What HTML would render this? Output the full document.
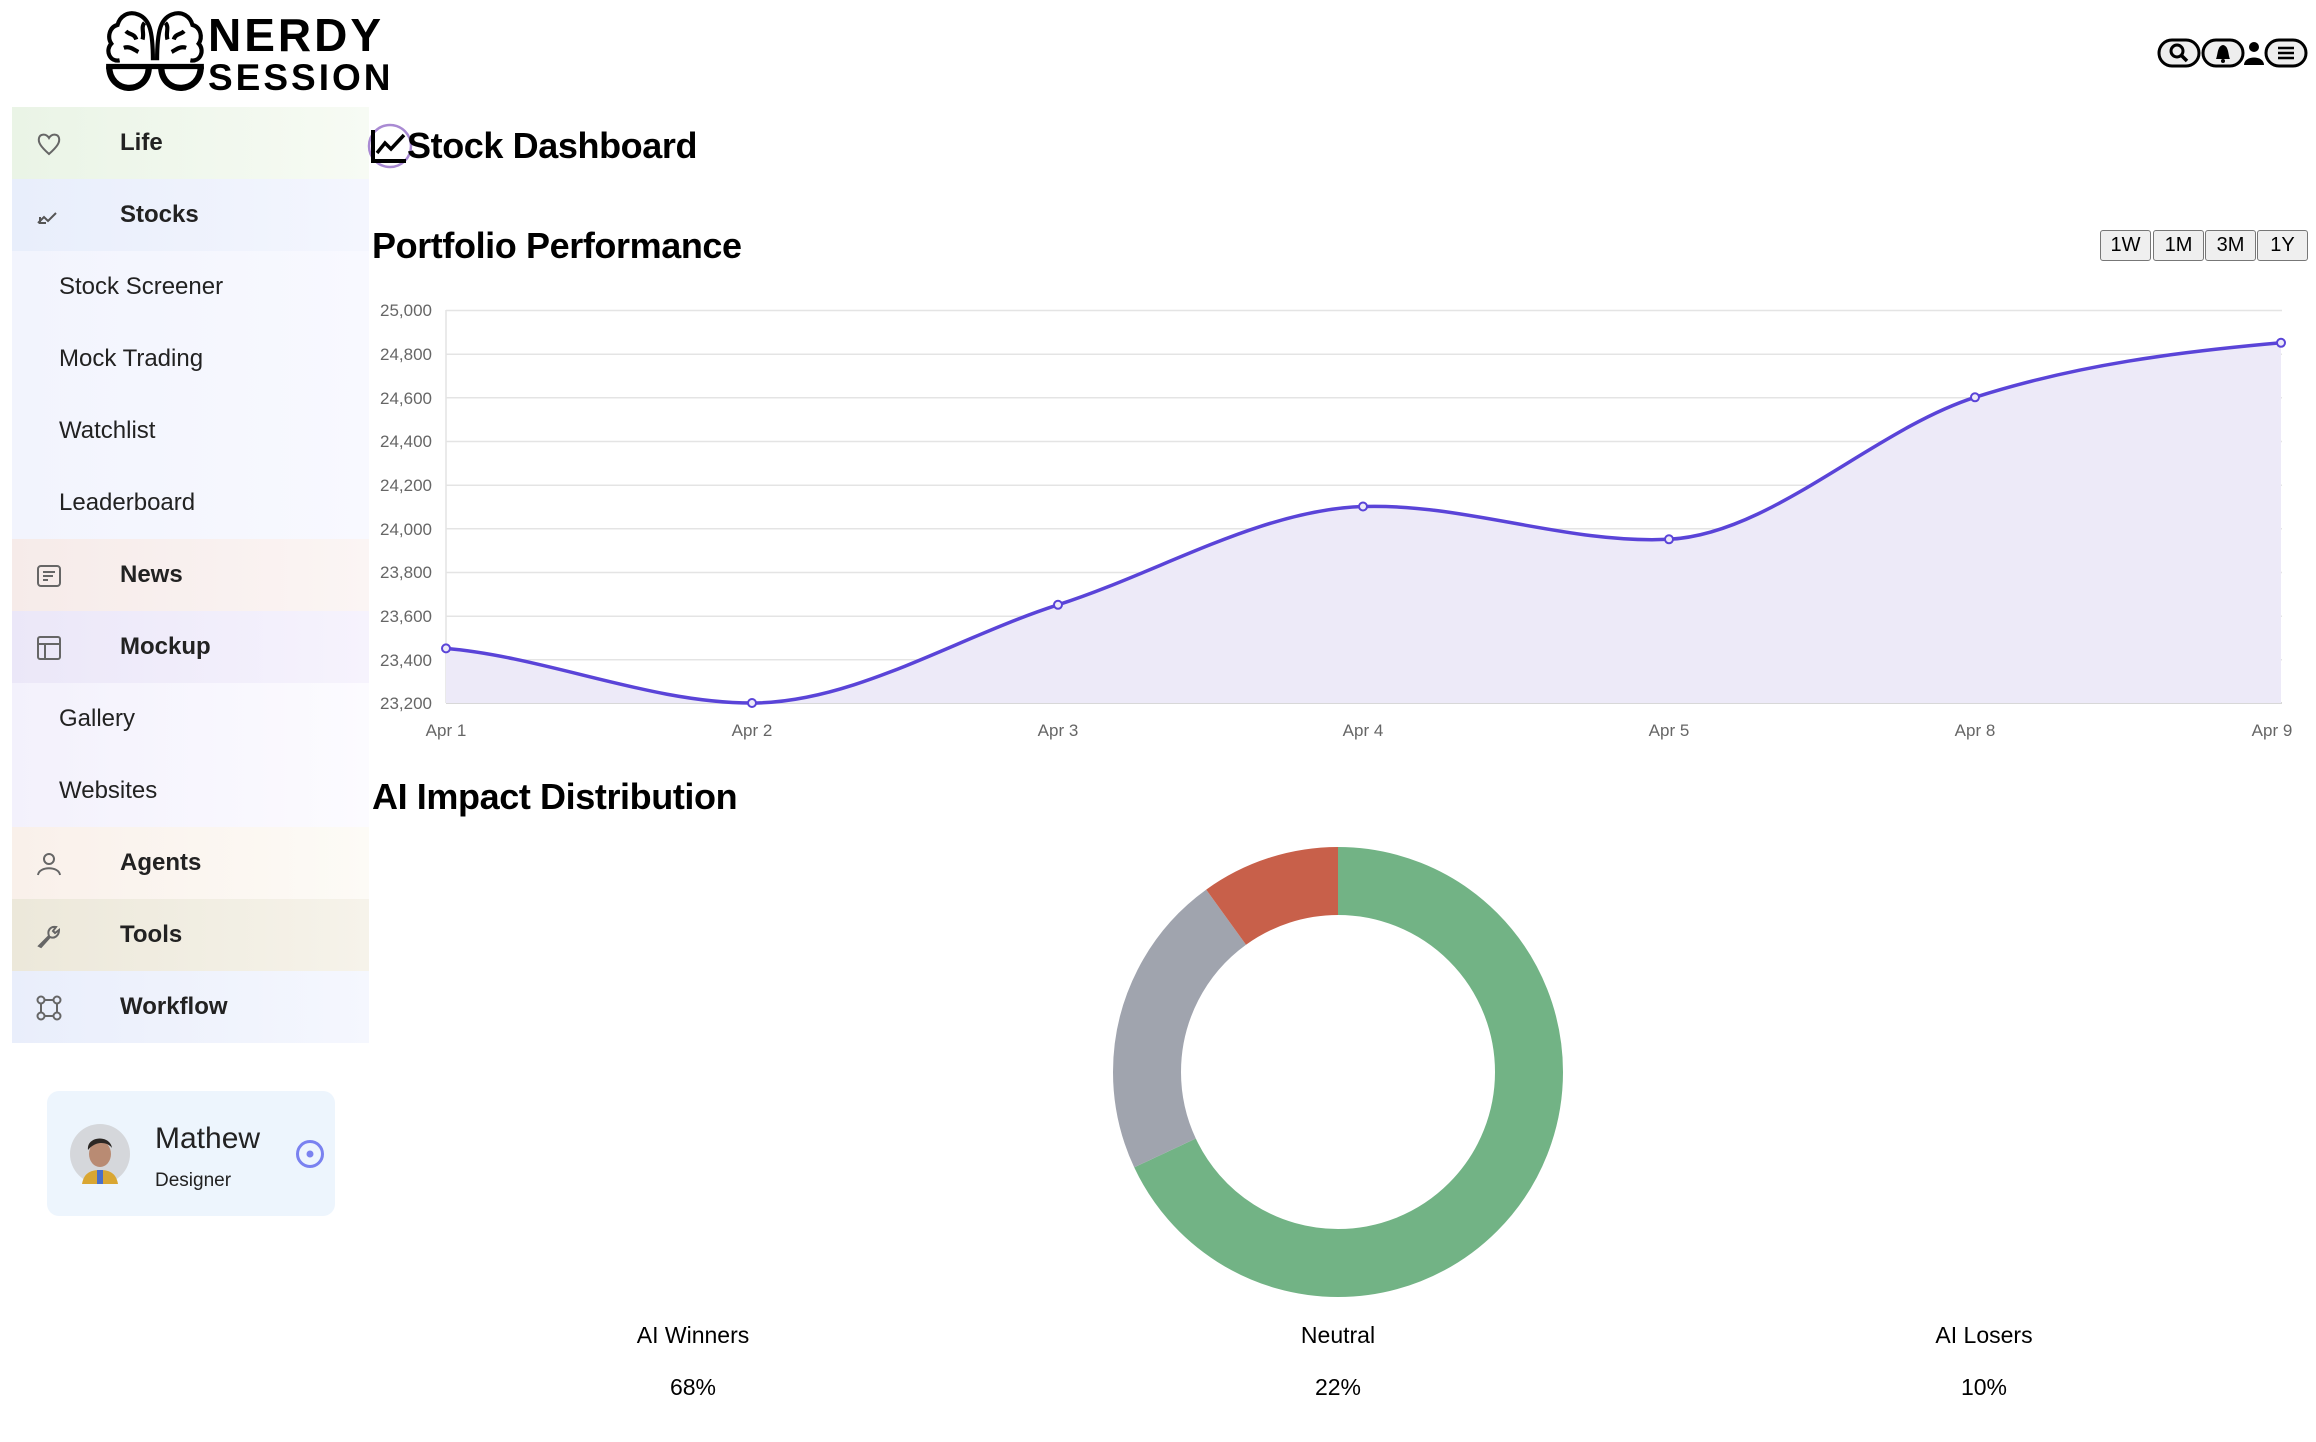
<!DOCTYPE html>
<html><head><meta charset="utf-8"><style>
*{margin:0;padding:0;box-sizing:border-box}
body{width:2316px;height:1442px;background:#fff;font-family:"Liberation Sans",sans-serif;position:relative;overflow:hidden;color:#000}
.abs{position:absolute}
.item{position:absolute;left:12px;width:357px;height:72px;display:flex;align-items:center;font-size:24px;color:#222}
.item.main{font-weight:bold}
.item .ic{position:absolute;left:24px;top:24px;width:26px;height:26px}
.item .lb{position:absolute;left:108px}
.item.sub .lb{left:47px;font-weight:normal}
.btn{position:absolute;top:230px;width:51px;height:31px;border:1.5px solid #777;border-radius:3px;background:#efefef;font-size:20px;text-align:center;line-height:29px}
.ylab{position:absolute;left:374px;width:58px;font-size:17px;color:#666;text-align:right}
.xlab{position:absolute;top:721px;font-size:17px;color:#666;transform:translateX(-50%)}
.leg{position:absolute;font-size:23px;transform:translateX(-50%)}
.h{position:absolute;font-size:36px;font-weight:bold;letter-spacing:-0.4px}
</style></head><body>

<svg class="abs" style="left:103px;top:8px" width="104" height="90" viewBox="0 0 100 86" fill="none" stroke="#000" stroke-width="4">
<path d="M48 50 C48 20 44 10 34 6 C24 2 16 8 14 16 C6 18 4 28 8 34 C2 40 6 52 16 50"/>
<path d="M52 50 C52 20 56 10 66 6 C76 2 84 8 86 16 C94 18 96 28 92 34 C98 40 94 52 84 50"/>
<path d="M22 22 C26 26 30 24 32 30 M20 38 C26 36 30 40 34 42 M78 22 C74 26 70 24 68 30 M80 38 C74 36 70 40 66 42 M40 14 C36 18 40 24 38 30 M60 14 C64 18 60 24 62 30"/>
<path d="M3 56 H97" stroke-width="5"/>
<path d="M6 56 C6 82 42 84 44 58 M56 58 C58 84 94 82 94 56" stroke-width="6"/>
</svg>
<div class="abs" style="left:208px;top:10px;font-size:46px;font-weight:bold;letter-spacing:3px;line-height:50px">NERDY</div>
<div class="abs" style="left:208px;top:56px;font-size:37px;font-weight:bold;letter-spacing:3px;line-height:44px">SESSION</div>

<svg class="abs" style="left:2156px;top:37px" width="152" height="32" viewBox="0 0 152 32">
<rect x="3" y="3" width="40" height="26" rx="13" fill="#eee" stroke="#000" stroke-width="3"/>
<circle cx="21" cy="14" r="6" fill="none" stroke="#000" stroke-width="3"/><path d="M25 18 L31 24" stroke="#000" stroke-width="3.5"/>
<rect x="47" y="3" width="40" height="26" rx="13" fill="#eee" stroke="#000" stroke-width="3"/>
<path d="M60 22 C62 18 61 9 67 8 C73 9 72 18 74 22 Z" fill="#000"/><circle cx="67" cy="24" r="2" fill="#000"/>
<circle cx="98" cy="10" r="5" fill="#000"/><path d="M88 28 C88 18 108 18 108 28 Z" fill="#000"/>
<rect x="110" y="3" width="40" height="26" rx="13" fill="#eee" stroke="#000" stroke-width="3"/>
<path d="M122 11 H138 M122 16 H138 M122 21 H138" stroke="#000" stroke-width="2.5"/>
</svg>

<div class="item main" style="top:107px;background:linear-gradient(90deg,#eaf4e6,#f7fbf4)"><svg class="ic" viewBox="0 0 26 26" fill="none" stroke="#666" stroke-width="2"><path d="M13 23 C4 15 2 11 3 7 C4 3 10 2 13 7 C16 2 22 3 23 7 C24 11 22 15 13 23Z"/></svg><span class="lb">Life</span></div>
<div class="item main" style="top:179px;background:linear-gradient(90deg,#e8eefb,#f4f6fe)"><svg class="ic" viewBox="0 0 26 26" fill="none" stroke="#555" stroke-width="2"><path d="M2 20 L8 14 L12 18 L20 10 M4 14 V20 H10"/></svg><span class="lb">Stocks</span></div>
<div class="item sub" style="top:251px;background:linear-gradient(90deg,#f2f4fd,#f8f9ff)"><span class="lb">Stock Screener</span></div>
<div class="item sub" style="top:323px;background:linear-gradient(90deg,#f2f4fd,#f8f9ff)"><span class="lb">Mock Trading</span></div>
<div class="item sub" style="top:395px;background:linear-gradient(90deg,#f2f4fd,#f8f9ff)"><span class="lb">Watchlist</span></div>
<div class="item sub" style="top:467px;background:linear-gradient(90deg,#f2f4fd,#f8f9ff)"><span class="lb">Leaderboard</span></div>
<div class="item main" style="top:539px;background:linear-gradient(90deg,#f6ebe9,#fbf5f4)"><svg class="ic" viewBox="0 0 26 26" fill="none" stroke="#666" stroke-width="2"><rect x="2" y="3" width="22" height="20" rx="3"/><path d="M7 9 H19 M7 13 H17 M7 17 H12"/></svg><span class="lb">News</span></div>
<div class="item main" style="top:611px;background:linear-gradient(90deg,#ebe7f8,#f6f3fd)"><svg class="ic" viewBox="0 0 26 26" fill="none" stroke="#666" stroke-width="2"><rect x="2" y="2" width="22" height="22" rx="2"/><path d="M2 9 H24 M9 9 V24"/></svg><span class="lb">Mockup</span></div>
<div class="item sub" style="top:683px;background:linear-gradient(90deg,#f3f1fc,#fcfbff)"><span class="lb">Gallery</span></div>
<div class="item sub" style="top:755px;background:linear-gradient(90deg,#f3f1fc,#fcfbff)"><span class="lb">Websites</span></div>
<div class="item main" style="top:827px;background:linear-gradient(90deg,#f9f0ea,#fdfbf6)"><svg class="ic" viewBox="0 0 26 26" fill="none" stroke="#666" stroke-width="2"><circle cx="13" cy="8" r="5"/><path d="M2 24 C3 15 23 15 24 24"/></svg><span class="lb">Agents</span></div>
<div class="item main" style="top:899px;background:linear-gradient(90deg,#ece8da,#f6f3ea)"><svg class="ic" viewBox="0 0 26 26" fill="none" stroke="#666" stroke-width="2"><path d="M3 23 L13 13 C11 8 14 3 20 4 L17 8 L19 10 L23 7 C23 13 18 16 14 14 L5 24 Z"/></svg><span class="lb">Tools</span></div>
<div class="item main" style="top:971px;background:linear-gradient(90deg,#e9eefb,#f5f7fe)"><svg class="ic" viewBox="0 0 26 26" fill="none" stroke="#666" stroke-width="2"><circle cx="5" cy="5" r="3.5"/><circle cx="21" cy="5" r="3.5"/><circle cx="5" cy="21" r="3.5"/><circle cx="21" cy="21" r="3.5"/><path d="M8.5 5 H17.5 M8.5 21 H17.5 M5 8.5 V17.5 M21 8.5 V17.5"/></svg><span class="lb">Workflow</span></div>

<div class="abs" style="left:47px;top:1091px;width:288px;height:125px;background:#edf5fd;border-radius:12px"></div>
<svg class="abs" style="left:70px;top:1124px" width="60" height="60" viewBox="0 0 60 60">
<circle cx="30" cy="30" r="30" fill="#d5d7db"/>
<path d="M12 60 C14 48 22 46 30 46 C38 46 46 48 48 60Z" fill="#d9a632"/>
<rect x="27" y="46" width="6" height="14" fill="#4a6fc9"/>
<ellipse cx="30" cy="30" rx="11" ry="13" fill="#b98b73"/>
<path d="M18 26 C16 12 40 10 42 24 C38 18 26 16 18 26Z" fill="#2c2724"/>
</svg>
<div class="abs" style="left:155px;top:1122px;font-size:30px;color:#222">Mathew</div>
<div class="abs" style="left:155px;top:1170px;font-size:19px;color:#222">Designer</div>
<svg class="abs" style="left:295px;top:1139px" width="30" height="30"><circle cx="15" cy="15" r="12.5" fill="none" stroke="#7a82f0" stroke-width="3"/><circle cx="15" cy="15" r="3.5" fill="#7a82f0"/></svg>

<svg class="abs" style="left:366px;top:121px" width="50" height="50" viewBox="0 0 50 50">
<circle cx="24" cy="25" r="21" fill="none" stroke="#a98ad3" stroke-width="2.5"/>
<path d="M7 9 V40 H40" fill="none" stroke="#000" stroke-width="4"/>
<path d="M11 32 L19 22 L25 28 L38 14" fill="none" stroke="#000" stroke-width="3.5"/>
</svg>
<div class="h" style="left:407px;top:125px">Stock Dashboard</div>
<div class="h" style="left:372px;top:225px">Portfolio Performance</div>
<div class="btn" style="left:2100px">1W</div>
<div class="btn" style="left:2153px">1M</div>
<div class="btn" style="left:2205px">3M</div>
<div class="btn" style="left:2257px">1Y</div>

<svg class="abs" style="left:0;top:0" width="2316" height="760">
<g stroke="#e4e4e4" stroke-width="1.5">
<path d="M446 310.5H2282M446 354.2H2282M446 397.8H2282M446 441.5H2282M446 485.2H2282M446 528.8H2282M446 572.5H2282M446 616.2H2282M446 659.8H2282"/>
</g>
<path d="M446 703H2282" stroke="#ccc" stroke-width="1.5"/>
<path d="M446 310 V703" stroke="#e4e4e4" stroke-width="1.5"/>
<path d="M446,648.4 C548,657.4 650,703 752,703 C854,703 956,637.5 1058,604.8 C1160,572.1 1261,509.8 1363,506.5 C1465,503.2 1567,544.3 1669,539.3 C1771,534.3 1873,429.9 1975,397.3 C2077,364.7 2179,351.8 2281,342.8 L2281,703 L446,703Z" fill="#edeaf8"/>
<path d="M446,648.4 C548,657.4 650,703 752,703 C854,703 956,637.5 1058,604.8 C1160,572.1 1261,509.8 1363,506.5 C1465,503.2 1567,544.3 1669,539.3 C1771,534.3 1873,429.9 1975,397.3 C2077,364.7 2179,351.8 2281,342.8" fill="none" stroke="#5a44d8" stroke-width="3.5"/>
<g fill="#edeaf8" stroke="#5a44d8" stroke-width="2">
<circle cx="446" cy="648.4" r="4"/><circle cx="752" cy="703" r="4"/><circle cx="1058" cy="604.8" r="4"/><circle cx="1363" cy="506.5" r="4"/><circle cx="1669" cy="539.3" r="4"/><circle cx="1975" cy="397.3" r="4"/><circle cx="2281" cy="342.8" r="4"/>
</g>
</svg>
<div class="ylab" style="top:301px">25,000</div>
<div class="ylab" style="top:345px">24,800</div>
<div class="ylab" style="top:389px">24,600</div>
<div class="ylab" style="top:432px">24,400</div>
<div class="ylab" style="top:476px">24,200</div>
<div class="ylab" style="top:520px">24,000</div>
<div class="ylab" style="top:563px">23,800</div>
<div class="ylab" style="top:607px">23,600</div>
<div class="ylab" style="top:651px">23,400</div>
<div class="ylab" style="top:694px">23,200</div>
<div class="xlab" style="left:446px">Apr 1</div>
<div class="xlab" style="left:752px">Apr 2</div>
<div class="xlab" style="left:1058px">Apr 3</div>
<div class="xlab" style="left:1363px">Apr 4</div>
<div class="xlab" style="left:1669px">Apr 5</div>
<div class="xlab" style="left:1975px">Apr 8</div>
<div class="xlab" style="left:2272px">Apr 9</div>

<div class="h" style="left:372px;top:776px">AI Impact Distribution</div>

<svg class="abs" style="left:1108px;top:842px" width="460" height="460" viewBox="0 0 460 460">
<g transform="rotate(-90 230 230)" fill="none" stroke-width="68">
<circle cx="230" cy="230" r="191" stroke="#72b385" stroke-dasharray="816.1 2000"/>
<circle cx="230" cy="230" r="191" stroke="#a0a4ae" stroke-dasharray="0 816.1 264 2000"/>
<circle cx="230" cy="230" r="191" stroke="#c8604a" stroke-dasharray="0 1080.1 120 2000"/>
</g>
</svg>

<div class="leg" style="left:693px;top:1322px">AI Winners</div>
<div class="leg" style="left:1338px;top:1322px">Neutral</div>
<div class="leg" style="left:1984px;top:1322px">AI Losers</div>
<div class="leg" style="left:693px;top:1374px">68%</div>
<div class="leg" style="left:1338px;top:1374px">22%</div>
<div class="leg" style="left:1984px;top:1374px">10%</div>
</body></html>
